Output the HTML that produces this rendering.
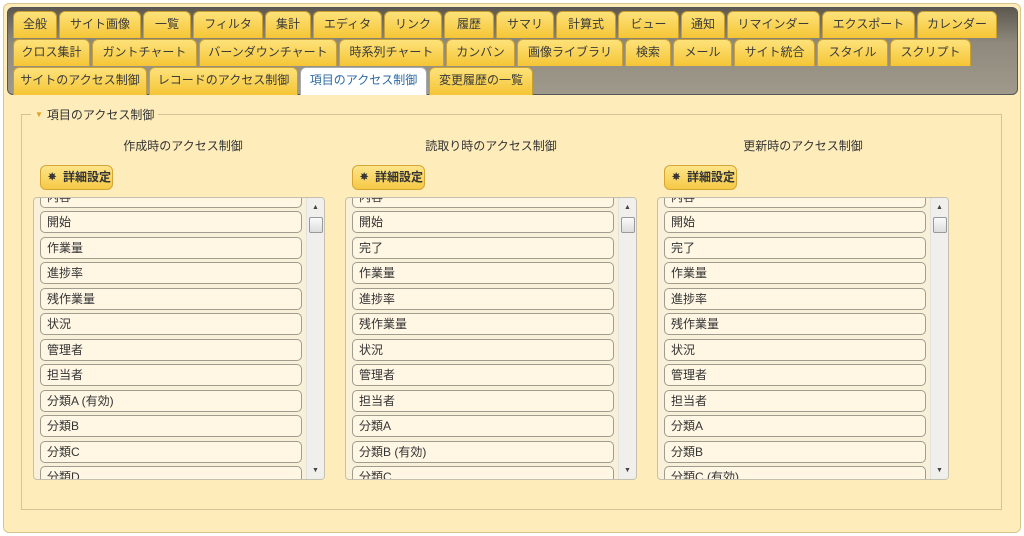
<!DOCTYPE html>
<html><head><meta charset="utf-8"><style>
*{box-sizing:border-box;margin:0;padding:0}
body{width:1024px;height:536px;background:#fff;font-family:"Liberation Sans","Noto Sans CJK JP",sans-serif;font-size:12px;color:#333;position:relative;overflow:hidden}
.outer{position:absolute;left:3px;top:3px;width:1018px;height:530px;background:#feedbb;border:1px solid #d9c48a;border-radius:6px}
.head{position:absolute;left:7px;top:7px;width:1011px;height:88px;background:linear-gradient(#5d5950,#8e897c 40%,#a09a8c);border:1px solid #555;border-radius:6px}
.tab{position:absolute;height:27px;background:linear-gradient(#fde27a,#f5c535);border:1px solid #c9a030;border-bottom:none;border-radius:6px 6px 0 0;text-align:center;line-height:25px;font-size:12px;color:#3a3a3a}
.tab.r3{height:28px}
.tab.act{background:#fff;color:#2d6aa5;border-color:#aaa}
.fs{position:absolute;left:21px;top:114px;width:981px;height:396px;border:1px solid #d3c49a}
.legend{position:absolute;left:31px;top:106px;background:#feedbb;padding:0 4px;font-size:12px;color:#333}
.legend b{color:#e0a020;font-size:8px;position:relative;top:-2px;margin-right:4px;font-weight:normal}
.ct{position:absolute;top:137px;width:300px;text-align:center;font-size:12px;color:#333}
.btn{position:absolute;top:165px;width:73px;height:25px;background:linear-gradient(#fde58a,#f6c945);border:1px solid #d5a535;border-radius:6px;font-size:12px;font-weight:bold;line-height:23px;padding-left:22px;color:#333}
.btn:before{content:"✵";position:absolute;left:7px;top:0;font-size:10px}
.box{position:absolute;top:197px;width:292px;height:283px;border:1px solid #c4c0b0;border-radius:4px;background:#f8f0d8;overflow:hidden}
.sb{position:absolute;right:0;top:0;width:18px;height:100%;background:#f0efec;border-left:1px solid #e4e2dc}
.sb .th{position:absolute;left:2px;top:19px;width:14px;height:16px;background:linear-gradient(#fafafa,#ddd);border:1px solid #999;border-radius:2px}
.sb .u,.sb .d{position:absolute;left:5px;font-size:7px;color:#444}
.sb .u{top:6px}.sb .d{bottom:5px}
.it{position:absolute;left:6px;width:262px;height:22px;background:#fff7e4;border:1px solid #a09c8e;border-radius:5px;font-size:12px;line-height:20px;padding-left:6px;color:#333}
</style></head><body>
<div class="outer"></div>
<div class="head"></div>
<div class="tab" style="left:13px;top:11px;width:44px">全般</div>
<div class="tab" style="left:59px;top:11px;width:82px">サイト画像</div>
<div class="tab" style="left:143px;top:11px;width:48px">一覧</div>
<div class="tab" style="left:193px;top:11px;width:70px">フィルタ</div>
<div class="tab" style="left:265px;top:11px;width:46px">集計</div>
<div class="tab" style="left:313px;top:11px;width:69px">エディタ</div>
<div class="tab" style="left:384px;top:11px;width:58px">リンク</div>
<div class="tab" style="left:444px;top:11px;width:50px">履歴</div>
<div class="tab" style="left:496px;top:11px;width:58px">サマリ</div>
<div class="tab" style="left:556px;top:11px;width:60px">計算式</div>
<div class="tab" style="left:618px;top:11px;width:61px">ビュー</div>
<div class="tab" style="left:681px;top:11px;width:44px">通知</div>
<div class="tab" style="left:727px;top:11px;width:93px">リマインダー</div>
<div class="tab" style="left:822px;top:11px;width:93px">エクスポート</div>
<div class="tab" style="left:917px;top:11px;width:80px">カレンダー</div>
<div class="tab" style="left:13px;top:39px;width:77px">クロス集計</div>
<div class="tab" style="left:92px;top:39px;width:105px">ガントチャート</div>
<div class="tab" style="left:199px;top:39px;width:138px">バーンダウンチャート</div>
<div class="tab" style="left:339px;top:39px;width:105px">時系列チャート</div>
<div class="tab" style="left:446px;top:39px;width:69px">カンバン</div>
<div class="tab" style="left:517px;top:39px;width:106px">画像ライブラリ</div>
<div class="tab" style="left:625px;top:39px;width:46px">検索</div>
<div class="tab" style="left:673px;top:39px;width:59px">メール</div>
<div class="tab" style="left:734px;top:39px;width:81px">サイト統合</div>
<div class="tab" style="left:817px;top:39px;width:71px">スタイル</div>
<div class="tab" style="left:890px;top:39px;width:81px">スクリプト</div>
<div class="tab r3" style="left:13px;top:67px;width:134px">サイトのアクセス制御</div>
<div class="tab r3" style="left:149px;top:67px;width:149px">レコードのアクセス制御</div>
<div class="tab r3 act" style="left:300px;top:67px;width:127px">項目のアクセス制御</div>
<div class="tab r3" style="left:429px;top:67px;width:104px">変更履歴の一覧</div>

<div class="fs"></div>
<div class="legend"><b>▼</b>項目のアクセス制御</div>

<div class="ct" style="left:33px">作成時のアクセス制御</div>
<div class="ct" style="left:341px">読取り時のアクセス制御</div>
<div class="ct" style="left:653px">更新時のアクセス制御</div>

<div class="btn" style="left:40px">詳細設定</div>
<div class="btn" style="left:352px">詳細設定</div>
<div class="btn" style="left:664px">詳細設定</div>

<div class="box" style="left:33px">
<div class="it" style="top:-12px">内容</div>
<div class="it" style="top:13px">開始</div>
<div class="it" style="top:38.5px">作業量</div>
<div class="it" style="top:64px">進捗率</div>
<div class="it" style="top:89.5px">残作業量</div>
<div class="it" style="top:115px">状況</div>
<div class="it" style="top:140.5px">管理者</div>
<div class="it" style="top:166px">担当者</div>
<div class="it" style="top:191.5px">分類A (有効)</div>
<div class="it" style="top:217px">分類B</div>
<div class="it" style="top:242.5px">分類C</div>
<div class="it" style="top:268px">分類D</div>
<div class="sb"><span class="u">▲</span><div class="th"></div><span class="d">▼</span></div>
</div>

<div class="box" style="left:345px">
<div class="it" style="top:-12px">内容</div>
<div class="it" style="top:13px">開始</div>
<div class="it" style="top:38.5px">完了</div>
<div class="it" style="top:64px">作業量</div>
<div class="it" style="top:89.5px">進捗率</div>
<div class="it" style="top:115px">残作業量</div>
<div class="it" style="top:140.5px">状況</div>
<div class="it" style="top:166px">管理者</div>
<div class="it" style="top:191.5px">担当者</div>
<div class="it" style="top:217px">分類A</div>
<div class="it" style="top:242.5px">分類B (有効)</div>
<div class="it" style="top:268px">分類C</div>
<div class="sb"><span class="u">▲</span><div class="th"></div><span class="d">▼</span></div>
</div>

<div class="box" style="left:657px">
<div class="it" style="top:-12px">内容</div>
<div class="it" style="top:13px">開始</div>
<div class="it" style="top:38.5px">完了</div>
<div class="it" style="top:64px">作業量</div>
<div class="it" style="top:89.5px">進捗率</div>
<div class="it" style="top:115px">残作業量</div>
<div class="it" style="top:140.5px">状況</div>
<div class="it" style="top:166px">管理者</div>
<div class="it" style="top:191.5px">担当者</div>
<div class="it" style="top:217px">分類A</div>
<div class="it" style="top:242.5px">分類B</div>
<div class="it" style="top:268px">分類C (有効)</div>
<div class="sb"><span class="u">▲</span><div class="th"></div><span class="d">▼</span></div>
</div>
</body></html>
